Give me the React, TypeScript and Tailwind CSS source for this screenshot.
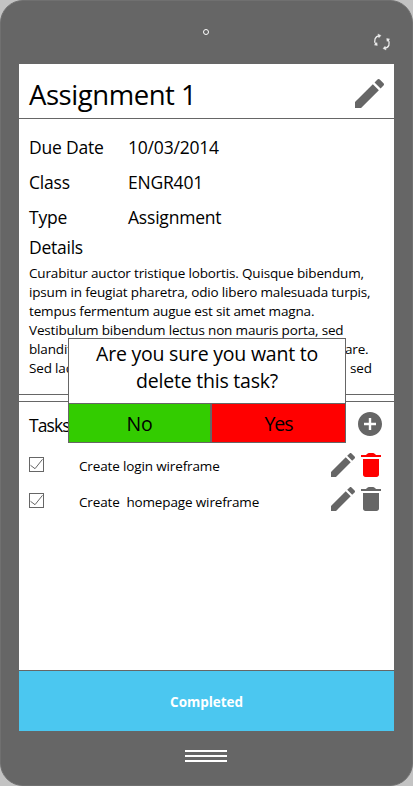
import type { ReactNode } from 'react';

const Pencil = ({ className }: { className: string }) => (
  <svg viewBox="3 3 18 18" className={className} fill="currentColor">
    <path d="M3 17.25V21h3.75L17.81 9.94l-3.75-3.75L3 17.25zM20.71 7.04c.39-.39.39-1.02 0-1.41l-2.34-2.34c-.39-.39-1.02-.39-1.41 0l-1.83 1.83 3.75 3.75 1.83-1.83z" />
  </svg>
);

const Trash = ({ className }: { className: string }) => (
  <svg viewBox="0 0 20 24" className={className} fill="currentColor">
    <path d="M2 6h16v15.500c0 1.400-1.100 2.500-2.500 2.500h-11c-1.400 0-2.500-1.100-2.500-2.500zM0 2h5c1-1 1.600-2 3-2h4c1.400 0 2 1 3 2h5v2H0z" />
  </svg>
);

const AddCircle = () => (
  <svg viewBox="2 2 20 20" className="h-6 w-6" fill="currentColor">
    <path d="M12 2C6.48 2 2 6.48 2 12s4.48 10 10 10 10-4.48 10-10S17.52 2 12 2zm5 11h-4v4h-2v-4H7v-2h4V7h2v4h4v2z" />
  </svg>
);

const Sync = () => (
  <svg viewBox="0 0 18 18" className="h-[18px] w-[18px]" stroke="#ececec" strokeWidth="1.3">
    <path fill="none" d="M6.500 2.800C2.200 2.900.2 7.500 3 11.500M11.500 15.200C15.800 15.100 17.800 10.500 15 6.500" />
    <path fill="#ececec" strokeWidth=".4" d="M4.900 1 8 2.500 5.900 4.800zM1.300 11.900 4.300 12.500 4 9.500zM13.100 17 10 15.500l2.100-2.300zM16.700 6.100 13.700 5.500l.3 3z" />
  </svg>
);

const Checkbox = () => (
  <svg viewBox="0 0 15 15" className="h-[15px] w-[15px]" fill="none" stroke="#666">
    <rect x=".5" y=".5" width="14" height="14" />
    <path d="M1.500 8.300 6 11.700 13.500 2.300" strokeWidth="1" />
  </svg>
);

const Field = ({ label, children }: { label: string; children?: ReactNode }) => (
  <div className="flex h-[35px] items-center text-[17.5px] tracking-[-0.2px]">
    <span className="w-[99px]">{label}</span>
    <span>{children}</span>
  </div>
);

const Task = ({ name, danger }: { name: string; danger?: boolean }) => (
  <div className="flex h-9 pl-[10px]">
    <div className="w-[50px] pt-[10px]"><Checkbox /></div>
    <span className="w-[252px] whitespace-pre pt-px text-[13.5px] leading-9 tracking-[-0.14px]">{name}</span>
    <Pencil className={danger ? 'mt-[6px] h-6 w-6' : 'mt-[4px] h-6 w-6'} />
    <Trash className={danger ? 'mt-[6px] ml-[6px] h-6 w-5 text-[#f00]' : 'mt-[4px] ml-[6px] h-6 w-5'} />
  </div>
);

const details = [
  'Curabitur auctor tristique lobortis. Quisque bibendum,',
  'ipsum in feugiat pharetra, odio libero malesuada turpis,',
  'tempus fermentum augue est sit amet magna.',
  'Vestibulum bibendum lectus non mauris porta, sed',
];

export default function App() {
  return (
    <div className="h-[786px] w-[413px] bg-[#c3c3c3] font-['Open_Sans','Noto_Sans',sans-serif] text-black">
      <div className="flex h-[786px] flex-col rounded-[23px] border border-[#707070] bg-[#666] px-[18px]">
        <div className="flex h-[63px] justify-end">
          <div className="mt-[28px] mr-[164px] h-[6px] w-[6px] rounded-full border border-white" />
          <div className="mt-[32px] mr-[3px]"><Sync /></div>
        </div>

        <main className="relative flex h-[667px] w-[375px] flex-col bg-white text-[#666]">
          <header className="flex h-[55px] items-start justify-between border-b border-[#666] pr-[10px] pl-[10px]">
            <h1 className="pt-[11px] text-[27.5px] leading-[40px] tracking-[-0.45px] text-black">Assignment 1</h1>
            <Pencil className="mt-[15px] h-[29px] w-[29px]" />
          </header>

          <section className="h-[276px] border-b border-[#666] pt-[11px] pl-[10px] text-black">
            <Field label="Due Date">10/03/2014</Field>
            <Field label="Class">ENGR401</Field>
            <Field label="Type">Assignment</Field>
            <h2 className="-mt-[1px] h-[30px] text-[17.5px] leading-[26px] tracking-[-0.25px]">Details</h2>
            <div className="text-[13.5px] leading-[19px] tracking-[-0.16px] whitespace-pre">
              {details.map((l) => <p key={l}>{l}</p>)}
              <p className="flex"><span className="w-[316px]">blandit</span><span>are.</span></p>
              <p className="flex"><span className="w-[321px]">Sed lac</span><span>sed</span></p>
            </div>
          </section>
          <div className="h-[7px] border-b border-[#666]" />

          <section className="flex flex-1 flex-col">
            <div className="flex h-[45px] justify-between pt-[10px] pr-3 pl-[10px]">
              <h2 className="-mt-px text-[17.5px] leading-7 tracking-[-0.9px] text-black">Tasks</h2>
              <AddCircle />
            </div>
            <div className="[&_span]:text-black">
              <Task name="Create login wireframe" danger />
              <Task name="Create  homepage wireframe" />
            </div>
          </section>

          <button className="h-[61px] border-t border-[#666] bg-[#4bc7f0] pt-[2px] text-[13.5px] font-bold tracking-[-0.05px] text-white">
            Completed
          </button>

          <div className="absolute top-[274px] left-[49px] flex h-[105px] w-[278px] flex-col border border-[#666] bg-white text-black">
            <p className="h-[64px] pt-px text-center text-[19.5px] leading-[27px] tracking-[-0.22px]">
              Are you sure you want to<br />delete this task?
            </p>
            <div className="flex flex-1 border-t border-[#666] text-[19.5px] tracking-[-0.3px]">
              <button className="w-[143px] border-r-2 border-[#666] bg-[#3c0] pt-[2px]">No</button>
              <button className="flex-1 bg-[#f00] pt-[2px] tracking-[-1px]">Yes</button>
            </div>
          </div>
        </main>

        <div className="mt-[19px] ml-[166px] flex flex-col gap-[3px]">
          <i className="h-[2px] w-[42px] bg-white" />
          <i className="h-[2px] w-[42px] bg-white" />
          <i className="h-[2px] w-[42px] bg-white" />
        </div>
      </div>
    </div>
  );
}
